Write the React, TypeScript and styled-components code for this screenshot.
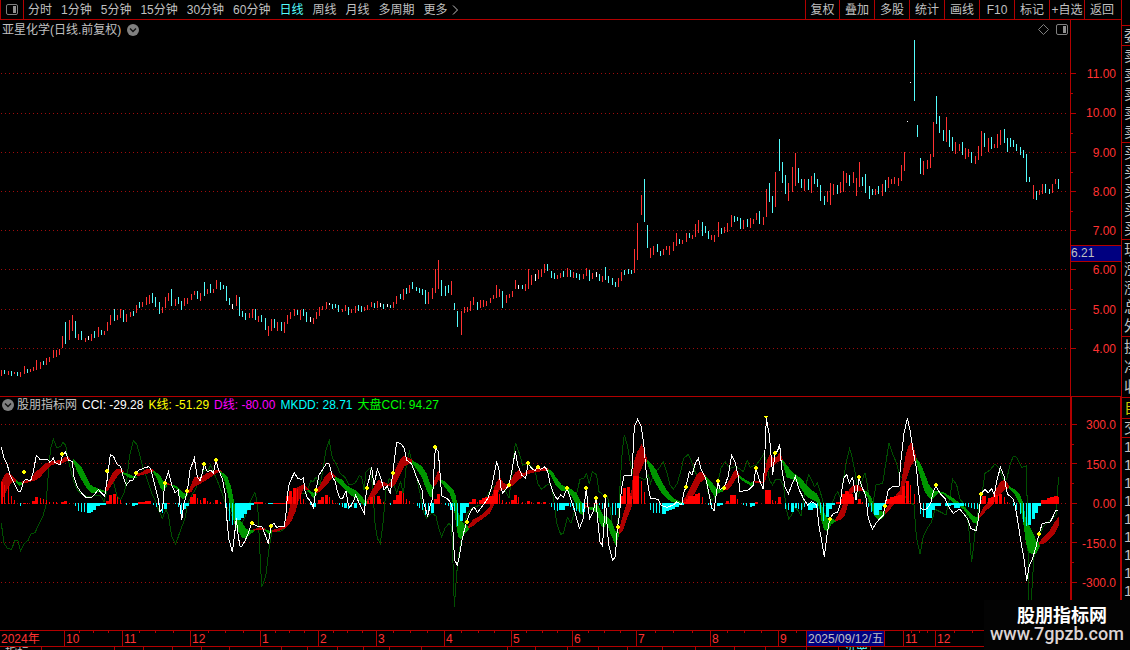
import React from "react";
import styled, { createGlobalStyle } from "styled-components";

const RULE = "#b20000";
const UP = "#ff3232";
const DOWN = "#54fcfc";
const SILVER = "#c0c0c0";

const Global = createGlobalStyle`
  * { box-sizing: border-box; }
  body {
    margin: 0;
    background: #000;
    color: ${SILVER};
    font: 12px/14px "Liberation Sans", "Noto Sans CJK SC", sans-serif;
    overflow: hidden;
  }
  button {
    margin: 0;
    padding: 0;
    border: 0;
    background: none;
    color: inherit;
    font: inherit;
    white-space: nowrap;
    cursor: pointer;
  }
  svg { display: block; }
`;

const Page = styled.div`
  position: relative;
  display: flex;
  height: 100vh;
  overflow: hidden;
`;

const Main = styled.main`
  flex: 1;
  min-width: 0;
  display: flex;
  flex-direction: column;
`;

const Toolbar = styled.header`
  display: flex;
  height: 20px;
  flex: none;
  border-bottom: 1px solid ${RULE};
`;

const LayoutButton = styled.button`
  display: flex;
  align-items: center;
  justify-content: center;
  width: 24px;
  border-left: 1px solid ${RULE};
  border-right: 1px solid ${RULE};
`;

const Periods = styled.nav`
  flex: 1;
  display: flex;
  align-items: center;
  gap: 9px;
  padding-left: 4px;
`;

const Period = styled.button<{ $active?: boolean }>`
  display: flex;
  align-items: center;
  gap: 4px;
  color: ${(p) => (p.$active ? DOWN : SILVER)};
`;

const Tools = styled.div`
  display: flex;
`;

const Tool = styled.button`
  width: 35px;
  border-left: 1px solid ${RULE};
  &:first-child { width: 34px; }
  &:last-child { width: 37px; padding-right: 2px; }
`;

const Panel = styled.section`
  display: flex;
  flex: none;
`;

const Plot = styled.div`
  flex: 1;
  min-width: 0;
`;

const PlotHeader = styled.div<{ $height: number }>`
  display: flex;
  align-items: center;
  height: ${(p) => p.$height}px;
  padding: 0 2px;
  white-space: nowrap;
`;

const TitleRow = styled.div`
  display: flex;
  align-items: center;
  gap: 6px;
  padding-top: 1px;
`;

const HeaderTools = styled.div`
  display: flex;
  gap: 7px;
  margin-left: auto;
  padding-top: 1px;
`;

const Legends = styled.div`
  display: flex;
  gap: 5px;
  padding-left: 3px;
`;

const Legend = styled.span<{ $color?: string }>`
  color: ${(p) => p.$color || SILVER};
`;

const Canvas = styled.svg<{ $height: number }>`
  width: 100%;
  height: ${(p) => p.$height}px;
  shape-rendering: crispEdges;
`;

const Axis = styled.div<{ $framed?: boolean }>`
  position: relative;
  display: flex;
  flex: none;
  width: 51px;
  border-left: ${(p) => (p.$framed ? 2 : 1)}px solid ${RULE};
  border-right: ${(p) => (p.$framed ? 1 : 0)}px solid ${RULE};
`;

const Scale = styled.div<{ $top: number; $bottom: number; $right: number }>`
  flex: 1;
  display: flex;
  flex-direction: column;
  justify-content: space-between;
  padding: ${(p) => p.$top}px ${(p) => p.$right}px ${(p) => p.$bottom}px 0;
  color: ${UP};
  text-align: right;
`;

const PriceTag = styled.div`
  position: absolute;
  top: 225px;
  left: 0;
  right: 0;
  height: 17px;
  line-height: 15px;
  border-top: 1px solid ${RULE};
  border-bottom: 1px solid ${RULE};
  background: #000080;
`;

const Divider = styled.div`
  flex: none;
  height: 1px;
  background: ${RULE};
`;

const Timeline = styled.div<{ $columns: string }>`
  display: grid;
  grid-template-columns: ${(p) => p.$columns};
  flex: none;
  height: 14px;
  border-bottom: 1px solid ${RULE};
  color: ${UP};
`;

const Month = styled.div<{ $first?: boolean; $picked?: boolean }>`
  height: 13px;
  line-height: 12px;
  padding-left: 1px;
  white-space: nowrap;
  border-left: ${(p) => (p.$first ? 0 : 1)}px solid ${RULE};
  background: ${(p) => (p.$picked ? "#000080" : "transparent")};
  color: ${(p) => (p.$picked ? SILVER : "inherit")};
`;

const Tabs = styled.div<{ $columns: string }>`
  display: grid;
  grid-template-columns: ${(p) => p.$columns};
  flex: 1;
  min-height: 3px;
  overflow: hidden;
`;

const Tab = styled.div<{ $active?: boolean }>`
  height: 18px;
  line-height: 12px;
  padding-left: 5px;
  border-right: 1px solid ${RULE};
  color: ${(p) => (p.$active ? DOWN : SILVER)};
  white-space: nowrap;
`;

const Quotes = styled.aside`
  flex: none;
  width: 9px;
  padding-top: 25px;
  border-left: 1px solid ${RULE};
  overflow: hidden;
`;

const QuoteGroup = styled.div<{ $height: number; $color?: string }>`
  display: flex;
  flex-direction: column;
  justify-content: space-around;
  height: ${(p) => p.$height}px;
  padding-left: 2px;
  border-top: 1px solid ${RULE};
  color: ${(p) => p.$color || SILVER};
  font-size: 15px;
  line-height: 18px;
  white-space: nowrap;
`;

const Brand = styled.div`
  position: absolute;
  right: 0;
  bottom: 0;
  width: 146px;
  height: 50px;
  padding: 2px 0 0 6px;
  background: #030303;
  color: #fff;
`;

const BrandName = styled.div`
  padding-left: 27px;
  font: 700 18px/24px "Noto Sans CJK SC", sans-serif;
`;

const BrandSite = styled.div`
  color: #dcd4d4;
  font: 500 18px/16px Roboto, sans-serif;
`;

/* Daily bars: x, high, low, kind (r rise, c fall, w flat) */
const BARS = `
1,370,376,r 4,370,374,c 8,371,375,r 11,371,376,c 14,372,374,r 17,372,376,c 20,372,377,r 24,366,374,r 27,369,373,c 30,369,372,r
33,367,371,r 36,360,370,r 40,362,369,r 43,361,365,c 46,358,365,r 49,357,362,r 53,350,358,r 56,350,357,r 59,349,355,r 62,336,348,r
65,322,344,c 69,320,340,r 72,315,331,r 75,321,338,c 78,334,340,r 81,331,340,c 85,338,342,r 88,336,340,w 91,334,341,r 94,331,338,c
98,327,337,r 101,330,335,c 104,331,335,r 107,322,331,r 110,315,325,r 114,309,321,c 117,315,320,r 120,309,318,r 123,310,322,c 126,314,322,r
130,312,317,r 133,311,316,c 136,305,313,r 139,302,308,c 142,302,307,r 146,297,305,r 149,295,304,r 152,293,303,c 155,297,307,c 159,302,314,c
162,307,313,r 165,297,308,r 168,293,301,r 171,289,306,c 175,299,306,r 178,297,304,c 181,301,310,c 184,298,306,r 187,298,304,r 191,294,300,r
194,291,295,r 197,291,299,c 200,293,301,r 204,282,296,c 207,289,294,r 210,284,293,c 213,289,293,r 216,280,289,r 220,282,290,c 223,285,289,c
226,286,301,c 229,298,305,c 232,304,309,w 236,295,306,r 239,297,316,c 242,311,317,c 245,313,320,c 249,313,318,r 252,309,318,r 255,309,320,c
258,316,322,r 261,315,322,c 265,318,330,c 268,326,336,r 271,319,331,r 274,319,328,c 277,322,331,r 281,322,331,c 284,322,333,r 287,315,324,r
290,312,319,r 294,309,316,r 297,310,315,c 300,310,320,r 303,309,316,c 306,312,322,c 310,317,322,w 313,318,324,r 316,312,319,r 319,307,316,r
322,306,310,r 326,302,309,r 329,303,305,w 332,304,309,c 335,304,308,c 338,305,312,c 342,309,312,r 345,305,311,r 348,307,315,c 351,309,313,r
355,306,313,r 358,305,311,c 361,306,312,c 364,307,311,r 367,305,310,r 371,302,307,r 374,303,308,c 377,301,308,r 380,303,307,w 383,304,309,c
387,304,307,w 390,305,308,c 393,302,308,r 396,296,304,r 400,294,299,c 403,289,300,r 406,288,294,c 409,285,293,r 412,282,289,c 416,287,291,c
419,288,293,c 422,289,295,c 425,290,304,c 428,292,304,r 432,288,299,r 435,269,293,r 438,260,289,r 441,280,296,c 445,286,296,c 448,285,293,c
451,281,295,r 454,303,310,c 457,311,327,c 461,311,335,r 464,307,313,r 467,307,312,r 470,301,311,r 473,297,305,r 477,302,310,c 480,300,308,r
483,300,307,r 486,301,306,r 490,298,303,r 493,295,299,r 496,285,298,r 499,289,297,r 502,291,308,c 506,295,303,r 509,294,298,r 512,291,297,r
515,280,289,r 518,285,289,w 522,285,289,c 525,284,291,r 528,269,289,r 531,275,285,r 535,274,281,w 538,270,279,r 541,269,277,r 544,264,273,r
547,264,271,c 551,271,278,c 554,273,279,c 557,275,279,r 560,273,278,r 563,271,277,c 567,268,277,r 570,270,277,c 573,272,278,r 576,273,278,c
579,274,280,c 583,274,279,r 586,268,276,r 589,270,281,c 592,273,279,r 596,272,277,w 599,274,281,c 602,276,282,r 605,267,280,c 608,276,283,c
612,278,285,c 615,282,287,c 618,278,287,r 621,272,281,r 624,270,275,c 628,269,274,c 631,270,274,c 634,249,273,r 637,223,260,r 641,195,215,r
644,179,222,c 647,225,248,c 650,248,258,r 653,246,255,r 657,244,252,c 660,251,256,c 663,249,255,r 666,246,250,r 669,246,255,r 673,242,251,r
676,233,246,r 679,239,244,c 682,240,244,r 686,233,242,r 689,233,238,c 692,235,239,r 695,224,237,r 698,220,233,r 702,222,236,c 705,226,233,c
708,231,239,c 711,235,240,r 714,235,242,r 718,222,237,r 721,228,234,c 724,227,233,r 727,223,232,r 731,215,227,r 734,216,222,c 737,217,221,c
740,218,229,c 743,220,229,r 747,219,227,c 750,218,228,r 753,219,224,r 756,213,220,r 759,211,224,c 763,217,225,r 766,189,217,r 769,183,202,c
772,196,213,c 775,172,207,r 779,139,171,c 782,162,183,c 785,175,194,c 788,183,201,r 792,167,192,r 795,153,186,r 798,168,183,c 801,179,188,c
804,179,191,r 808,179,190,c 811,176,193,r 814,173,184,c 817,179,187,c 820,185,201,c 824,196,205,c 827,191,202,r 830,183,205,r 833,184,195,r
837,185,194,c 840,182,193,r 843,171,192,r 846,173,183,r 849,175,186,c 853,172,183,r 856,178,196,r 859,162,187,r 862,177,186,c 865,174,193,c
869,186,199,c 872,189,195,c 875,189,195,r 878,186,194,c 882,184,196,r 885,180,192,c 888,177,188,r 891,179,184,r 894,177,184,r 898,178,186,r
901,165,181,r 904,152,171,r 907,121,122,w 910,82,83,w 914,40,101,c 917,125,137,c 920,158,174,c 923,161,175,r 927,160,169,r 930,154,168,r
933,122,157,r 936,96,124,c 939,116,133,c 943,130,141,c 946,117,142,r 949,130,147,c 952,137,151,c 955,142,154,r 959,144,151,r 962,142,155,c
965,148,159,r 968,149,157,r 971,152,163,c 975,156,164,r 978,146,160,r 981,131,156,r 984,133,147,c 988,138,152,r 991,137,149,c 994,144,148,r
997,134,148,r 1000,130,145,r 1004,129,143,c 1007,138,152,c 1010,138,147,c 1013,140,147,c 1016,144,151,c 1020,147,155,c 1023,150,158,c 1026,154,182,c
1029,177,182,c 1033,185,199,r 1036,191,200,c 1039,190,195,r 1042,184,194,r 1045,184,193,c 1049,189,194,c 1052,184,193,r 1055,179,184,r 1058,179,189,c`;

/* Indicator samples are kept per block, in thirds of a chart unit from the block's origin */
type Block = { from: number; data: string };

const CCI: Block[] = [
  { from: 0, data: "4,172 12,205 22,225 30,255 38,270 48,290 55,305 62,305 70,275 78,268 92,272 100,245 109,196 120,208 145,210 150,217 160,204 165,218 180,225 186,200 196,185 205,210 217,215 222,260 232,290 245,310 258,322 275,322 285,312 295,298 305,310 314,318 320,280 331,193 341,200 350,222 362,230 370,262 379,285 390,272 400,270 410,245 418,240 430,235 446,230 452,237 460,268 468,300 474,325 480,365 488,355 494,280 505,245 515,285 525,308 535,300 540,345 545,390 552,340 562,305 570,240 583,205 592,260 600,272 607,250 612,222 622,245 632,240 640,250 648,210 656,240 668,270 675,310 680,380 686,445 697,485 703,440 709,385 715,440 720,468 726,468 735,452 745,430" },
  { from: 250, data: "5,400 20,408 35,408 42,425 55,462 63,408 72,400 80,412 92,408 103,408 108,370 113,310 118,280 133,248 143,265 155,268 161,262 163,295 170,320 182,335 190,352 198,300 207,255 220,235 230,220 238,222 247,260 256,275 262,305 270,325 278,325 288,303 295,345 300,352 310,335 317,315 330,345 343,370 350,295 358,265 365,232 372,285 382,238 392,262 402,300 412,288 421,312 428,250 440,157 452,160 463,175 470,210 485,222 500,262 516,300 520,335 533,378 541,345 548,325 550,270 556,172 565,185 570,250 575,318 590,325 600,335 606,350 610,450 614,510 622,525 628,500 635,455 642,425 650,395 660,368 672,350 682,368 692,355 705,338 715,322 725,290 732,255 740,214 747,240" },
  { from: 500, data: "2,290 8,310 15,300 27,285 36,240 46,183 53,225 65,255 77,265 84,220 92,232 105,243 113,230 122,238 135,230 143,245 150,280 160,310 172,328 182,315 190,322 201,295 210,322 222,355 238,415 250,385 253,345 259,295 264,350 269,385 280,365 288,325 293,390 300,455 307,467 311,420 316,318 320,390 326,465 338,511 346,500 352,415 359,370 364,300 372,257 395,255 399,190 403,110 413,88 424,110 432,170 438,240 446,300 452,325 475,328 482,345 500,352 520,345 530,335 545,345 551,310 558,290 568,245 576,255 586,220 595,205 604,240 617,265 625,300 634,350 642,362 654,275 660,298 672,295 684,260 695,195 706,218 715,260 720,305 745,300" },
  { from: 750, data: "0,296 10,285 18,234 28,270 40,298 45,180 49,85 58,135 68,255 75,188 82,185 89,163 95,235 105,290 115,312 125,285 136,260 148,300 160,325 173,345 185,335 200,345 208,415 213,440 223,500 231,435 239,388 250,370 262,368 270,345 275,305 281,265 290,253 298,280 308,262 318,330 327,262 335,290 347,315 355,385 367,417 378,400 390,385 400,375 405,345 415,300 430,288 447,288 452,220 462,130 472,85 480,120 490,185 500,240 505,300 512,355 522,360 532,355 542,340 550,305 558,288 570,310 585,325 597,352 610,370 628,358" },
  { from: 960, data: "0,358 22,385 32,415 48,422 55,390 63,312 75,298 85,308 95,296 103,315 110,275 121,232 132,258 142,312 158,325 165,345 172,385 185,470 191,500 200,572 208,525 218,505 228,470 237,432 247,400 270,397 278,382 288,360 294,360" },
];

const MARKET: Block[] = [
  { from: 0, data: "4,400 12,460 22,475 35,478 45,450 53,450 62,483 72,462 85,450 92,432 105,428 118,400 130,375 138,345 145,250 152,175 160,148 170,172 182,170 188,157 197,165 203,205 215,250 222,275 232,300 245,312 262,320 280,318 300,315 312,335 322,300 330,270 340,275 352,322 362,328 372,310 380,275 388,200 400,152 410,162 418,190 428,230 437,255 445,280 455,310 465,330 475,358 487,385 498,358 505,375 515,440 527,463 540,425 555,385 562,345 572,322 585,300 600,265 612,240 625,240 632,225 640,245 655,280 668,315 680,350 692,370 705,395 718,415 728,395 735,380 745,350" },
  { from: 250, data: "5,325 15,308 23,345 28,450 35,592 47,560 58,470 66,425 90,425 105,415 115,385 125,360 140,345 152,310 170,310 182,272 190,275 198,260 210,285 218,245 228,180 238,152 247,205 258,220 270,250 285,262 297,285 315,280 328,257 335,260 342,300 348,245 360,235 368,290 375,400 382,445 391,460 399,400 408,300 418,265 430,280 440,308 452,275 460,315 470,215 478,185 488,225 500,262 510,310 522,370 530,385 545,370 558,378 566,415 575,440 585,415 597,400 605,410 609,520 613,650 620,550 630,470 640,410 652,370 665,355 690,345 705,330 718,305 730,290 745,285" },
  { from: 500, data: "5,285 15,300 27,325 36,250 46,158 58,190 68,225 85,220 98,235 106,245 113,280 125,298 140,285 152,280 160,320 170,400 182,433 190,430 202,382 213,400 222,370 230,310 240,268 252,265 260,250 268,282 277,245 290,255 297,305 310,315 322,320 330,350 340,430 348,455 355,380 361,270 367,180 373,135 383,170 392,225 400,255 420,262 435,270 445,255 452,280 462,245 475,238 490,215 500,245 510,285 520,298 532,280 542,245 551,205 565,193 575,215 587,250 600,262 617,265 625,310 637,330 648,315 655,270 663,235 675,215 690,235 705,230 717,235 730,245 742,212" },
  { from: 750, data: "0,232 18,225 30,210 41,192 50,215 58,270 68,285 77,268 90,268 100,285 110,360 116,387 125,375 133,350 143,360 153,377 162,320 170,275 176,255 185,270 193,290 202,280 212,310 222,345 232,350 245,345 255,318 263,305 272,325 280,270 290,210 299,175 307,205 315,245 325,320 335,275 345,248 353,290 358,345 367,350 378,285 398,280 408,215 417,160 428,192 440,220 450,260 460,265 465,320 478,335 492,345 499,440 510,492 520,440 532,415 545,395 555,358 570,365 588,375 598,330 608,268 620,285" },
  { from: 960, data: "0,328 15,345 25,400 35,517 45,430 57,345 65,320 75,250 90,240 105,222 118,235 130,268 140,268 150,225 160,198 170,202 185,232 199,228 203,400 206,640 213,640 222,500 232,450 250,410 275,385 288,375 292,310 296,262" },
];

/* K/D ribbon: "colour x,top,bottom ..." per stretch */
const RIBBON: Block[] = [
  { from: 0, data: `r 2,278,345 12,258,318 22,248,298 30,250,285 40,260,275 48,270,276|g 48,270,276 57,276,288 66,276,284
|r 66,274,282 92,268,275 105,248,272 120,235,262 135,222,245 150,214,228 165,212,222 185,210,220 196,200,216 210,203,209
|g 218,206,213 232,218,245 245,232,270 260,262,295 272,285,308 285,292,308 300,297,306 314,302,308
|r 314,302,308 325,275,300 338,248,280 350,236,262 362,236,250 372,246,251|g 368,246,250 385,252,262 400,258,266 412,260,263
|r 410,253,260 425,246,255 440,238,252 455,236,246 462,242,245|g 458,240,244 470,248,265 480,255,290 488,270,305 495,278,295 502,283,288
|r 500,280,286 515,281,286|g 515,283,287 530,288,298 538,295,318 548,308,328 558,312,322 565,308,312
|r 565,305,310 575,280,305 583,262,290 600,262,282 620,250,270 640,244,256 655,238,246 665,243,247
|g 661,243,248 673,252,270 683,262,310 693,290,360 703,340,400 715,385,425 728,400,445 740,418,443 752,420,430 762,418,421
|r 758,418,422 780,412,420 795,415,420|g 795,418,422 808,424,435` },
  { from: 250, data: `g 0,424,434 12,418,424|r 12,417,422 30,412,418 48,417,421|g 46,418,424 58,422,436 66,420,426
|r 66,420,426 85,415,424 103,408,416 113,375,408 123,335,395 135,300,370 145,290,335 160,283,298 170,292,300 178,300,303
|g 174,298,304 190,308,324 200,304,314|r 198,300,310 210,285,305 225,260,290 238,245,275 250,250,262 260,261,266
|g 256,261,268 275,268,290 290,285,305 305,295,318 320,302,325 335,318,340 345,333,350 352,334,338
|r 350,332,338 360,312,330 372,290,320 385,270,305 400,276,288 415,282,288 425,272,292 435,240,285 450,210,255 462,197,230 475,203,222 489,211,220
|g 487,211,220 500,218,238 515,228,262 530,250,300 540,280,320 550,293,320|r 548,285,295 558,258,285 565,240,270 573,265,275
|g 572,268,275 585,275,292 600,290,312 610,300,345 618,320,400 624,365,440 632,385,446 643,405,432 657,408,420
|r 655,408,414 670,388,408 685,380,395 700,370,385 720,350,370 730,300,350 740,275,320 750,262,295 762,280,290 775,282,290 785,265,288 795,248,280 808,240,268` },
  { from: 500, data: `r 0,275,303 15,282,297 30,282,292 40,255,285 55,240,270 70,250,260 85,240,252 105,238,247 130,234,243 143,235,241
|g 143,236,242 155,242,262 170,265,290 185,285,302 200,292,302 215,298,320 230,310,350 240,330,372 250,345,375 257,345,352
|r 254,345,351 268,349,354|g 265,350,356 280,352,362 292,340,370 300,358,400 310,378,415 320,378,400 335,395,440 347,425,465 356,425,440 361,412,418
|r 357,420,432 370,370,420 385,325,375 395,300,350 402,215,285 412,185,265 425,162,235 433,180,215 443,210,217
|g 441,210,218 455,222,255 470,242,285 485,275,310 500,300,325 515,320,335 535,333,341 550,337,342
|r 546,337,341 560,315,335 575,285,325 590,255,300 600,244,278 617,254,265|g 615,258,264 630,270,298 645,290,322 655,298,310 670,298,304
|r 668,297,303 685,275,298 700,248,280 710,238,262 720,258,262|g 716,256,262 735,268,278 755,280,288 763,276,282` },
  { from: 750, data: `g 0,278,288 12,275,282|r 10,272,277 38,275,280 45,240,275 53,205,245 60,192,232 72,205,225 80,200,218 90,188,212 98,208,214
|g 96,208,214 110,225,262 125,245,267 140,255,275 155,268,298 170,285,320 185,300,328 200,310,335 208,325,355 215,345,395 222,365,418 232,385,425 245,385,402 258,391,395
|r 255,390,395 270,365,390 285,325,375 298,298,330 310,285,305 325,285,302 340,297,302|g 338,297,303 355,308,325 365,325,355 373,350,378 385,362,388 398,365,385 408,360,368
|r 405,362,372 415,345,365 430,325,345 450,300,330 458,250,305 466,200,280 475,168,250 483,158,228 492,172,215 499,205,210
|g 497,202,210 510,218,258 522,245,300 535,280,322 545,295,330 553,303,320 565,304,310 580,306,313 600,318,330 620,332,346 640,348,357 655,362,378 670,378,398 682,383,402 688,375,382` },
  { from: 960, data: `r 58,375,385 68,355,375 80,340,360 95,325,348 108,298,330 120,278,312 133,268,300 148,287,293
|g 146,288,293 165,298,315 180,315,345 190,340,400 198,390,460 207,405,487 220,430,494 230,455,490 240,459,466
|r 237,458,464 255,435,460 270,420,445 285,395,430 297,378,405` },
];

/* MKDD histogram: x, width, tip; tips above the zero line are gains */
const ZERO = 340;
const MKDD: Block[] = [
  { from: 0, data: "3,6,275 12,3,283 24,3,285 33,3,315 42,3,328 60,3,348 69,9,336 81,3,337 96,12,330 105,9,318 120,3,322 129,3,324 138,3,327 147,3,333 159,3,333 168,3,334 183,9,334 192,9,330 207,3,337 225,3,350 234,3,363 243,3,366 252,3,368 261,12,370 270,9,367 279,9,360 288,12,350 300,18,347 318,9,330 327,9,312 339,9,310 351,3,318 360,3,327 378,3,345 396,9,348 405,9,345 414,9,334 423,12,333 435,18,330 459,3,345 468,3,352 477,3,368 486,3,370 492,9,358 501,9,336 525,3,344 534,3,352 543,3,372 549,9,357 558,9,350 570,9,318 579,9,309 591,3,321 600,3,328 609,9,321 621,3,330 630,3,333 645,9,328 660,3,335 678,3,370 687,3,395 696,3,405 705,18,390 723,9,385 732,9,372 741,12,360 753,9,345" },
  { from: 250, data: "0,4,360 12,27,335 54,15,344 69,36,336 108,9,315 117,9,300 129,9,292 141,3,295 150,3,308 159,3,325 180,3,345 189,9,352 204,9,327 213,9,318 225,9,312 237,3,318 246,3,328 255,3,337 267,3,346 276,3,352 282,9,355 294,3,357 303,3,352 312,9,355 330,3,352 342,3,358 351,6,332 360,9,320 372,3,315 381,9,315 390,3,325 399,3,335 420,3,345 429,9,328 438,9,312 447,9,300 459,3,307 468,3,325 477,3,332 501,3,350 507,3,355 516,3,362 525,3,377 534,3,372 543,9,370 552,9,325 561,9,309 585,3,345 594,3,350 600,9,360 612,3,365 621,3,408 630,9,395 639,9,370 648,9,352 657,9,333 666,12,325 681,3,335 687,9,328 696,9,322 705,12,320 717,18,315 732,12,297 747,3,310" },
  { from: 500, data: "6,3,327 18,3,335 27,3,335 33,9,327 42,9,312 54,3,320 66,3,333 81,9,330 93,3,334 111,9,333 129,9,333 153,3,352 162,3,360 171,3,363 177,18,362 195,12,350 210,3,352 219,3,360 228,3,365 237,3,368 246,9,366 255,9,336 285,9,336 297,3,345 306,3,357 324,3,352 336,3,375 345,3,375 351,9,354 360,9,315 369,9,292 381,9,288 390,6,315 399,18,257 423,3,270 432,3,303 450,3,362 459,3,370 468,3,370 477,3,370 486,12,372 498,9,365 507,9,362 516,9,359 525,12,352 537,15,347 552,9,333 558,6,325 564,12,315 576,9,315 585,12,310 594,6,306 606,3,320 624,3,347 633,3,358 642,3,365 651,9,350 660,9,345 678,9,330 690,18,312 711,3,325 729,3,346 738,3,348" },
  { from: 750, data: "0,6,352 6,9,348 15,9,334 45,18,297 66,3,327 75,3,330 84,9,318 105,3,357 114,3,362 123,9,366 135,6,354 144,3,358 153,3,360 162,3,352 174,15,362 189,9,355 201,3,365 210,3,370 219,3,395 228,9,382 237,9,358 246,9,345 258,12,335 270,6,325 276,9,310 285,9,300 294,3,305 297,12,310 309,3,318 324,9,325 336,3,335 354,3,352 363,3,368 372,15,375 387,9,360 396,9,350 408,12,325 420,12,318 432,12,315 444,12,312 456,9,285 468,9,270 480,3,282 492,3,310 510,3,372 519,3,382 528,18,385 546,9,362 555,18,348 585,9,348 594,9,350 603,9,347 612,9,356 621,9,354" },
  { from: 960, data: "0,12,350 15,3,350 24,3,353 33,3,356 42,3,357 51,3,358 60,9,328 66,12,316 84,9,322 93,9,318 105,9,312 117,9,310 132,3,320 141,3,335 159,3,350 168,3,360 180,3,372 189,3,398 198,3,410 204,9,405 216,9,388 225,9,370 234,9,350 243,18,327 261,9,322 270,12,320 282,12,316 294,3,320" },
];

const SIGNALS: Block[] = [
  { from: 0, data: "72,245 186,192 321,242 408,249 495,279 561,303 612,222 648,210 756,399" },
  { from: 250, data: "63,408 198,300 351,294 429,249 555,171 651,396 777,285" },
  { from: 500, data: "84,219 114,231 201,294 258,294 288,324 315,318 354,411 558,291 654,273 672,294 768,234" },
  { from: 750, data: "75,189 240,387 327,261 405,348 558,285 693,312" },
  { from: 960, data: "237,432" },
];

const split = (s: string) => s.trim().split(/\s+/).map((t) => t.split(","));
const px = (from: number, v: number | string) => from + Number(v) / 3;
const py = (v: number | string) => 390 + Number(v) / 3;

const linePoints = (blocks: Block[]) =>
  blocks.map((b) => split(b.data).map(([x, y]) => `${px(b.from, x)},${py(y)}`).join(" ")).join(" ");

const ribbonShapes = RIBBON.flatMap((b) =>
  b.data.split("|").map((stretch) => {
    const s = stretch.trim();
    const cols = split(s.slice(1));
    const top = cols.map(([x, t]) => `${px(b.from, x)},${py(t)}`);
    const low = cols.map(([x, , l]) => `${px(b.from, x)},${py(l)}`).reverse();
    return { fill: s[0] === "r" ? "#b00000" : "#009600", points: [...top, ...low].join(" ") };
  })
);

const kinds: Record<string, string> = { r: UP, c: DOWN, w: "#fff" };

const Grid = ({ rows }: { rows: number[] }) => (
  <g stroke="#a00c0c" strokeDasharray="1 3">
    {rows.map((y) => (
      <line key={y} x1={1} x2={1067} y1={y + 0.5} y2={y + 0.5} />
    ))}
  </g>
);

const Ticks = ({ top, height, major, minor }: { top: number; height: number; major: number[]; minor: number[] }) => (
  <svg width={5} height={height} viewBox={`0 ${top} 5 ${height}`} shapeRendering="crispEdges" fill={RULE}>
    {major.map((y) => <rect key={y} x={0} y={y} width={5} height={1} />)}
    {minor.map((y) => <rect key={y} x={0} y={y} width={2} height={1} />)}
  </svg>
);

const PanelIcon = () => (
  <svg width={12} height={12} viewBox="0 0 12 12" fill="none">
    <rect x="0.5" y="0.5" width="11" height="10" rx="1.5" stroke="#808080" />
    <rect x="7" y="2" width="3" height="7" fill="#909090" />
  </svg>
);

const DiamondIcon = () => (
  <svg width={11} height={11} viewBox="0 0 11 11" fill="none">
    <path d="M5.5 0.5 10.5 5.5 5.5 10.5 0.5 5.5Z" stroke="#808080" />
  </svg>
);

const CollapseIcon = () => (
  <svg width={12} height={12} viewBox="0 0 12 12" fill="none">
    <circle cx="6" cy="6" r="6" fill="#808080" />
    <path d="M3 4.5 6 7.5 9 4.5" stroke="#111" strokeWidth="1.4" />
  </svg>
);

const MoreIcon = () => (
  <svg width={7} height={10} viewBox="0 0 7 10" fill="none">
    <path d="M1 0.5 5.5 5 1 9.5" stroke={SILVER} />
  </svg>
);

const PERIODS = ["分时", "1分钟", "5分钟", "15分钟", "30分钟", "60分钟", "日线", "周线", "月线", "多周期", "更多"];
const TOOLS = ["复权", "叠加", "多股", "统计", "画线", "F10", "标记", "+自选", "返回"];
const PRICES = [73, 113, 152, 191, 230, 269, 309, 348];
const LEVELS = [424, 463, 503, 542, 582];

const MONTHS: [string, number][] = [
  ["2024年", 64], ["10", 58], ["11", 68], ["12", 70], ["1", 58], ["2", 58], ["3", 68], ["4", 67], ["5", 61],
  ["6", 64], ["7", 74], ["8", 68], ["9", 28], ["2025/09/12/五", 78], ["", 19], ["11", 32], ["12", 186],
];
const MONTH_TICKS = [64, 122, 190, 260, 318, 376, 444, 511, 572, 636, 710, 778, 806, 884, 903, 935];
const WEEK_TICKS = [
  79, 93, 108, 139, 155, 173, 208, 225, 243, 275, 289, 304, 333, 347, 362, 393, 410, 427, 461, 478, 494, 526, 542, 557,
  588, 604, 620, 655, 673, 692, 727, 744, 761, 796, 911, 919, 927, 954, 972,
];
const TABS = [42, 73, 29, 29, 29, 28, 52, 26, 30, 26, 26, 32, 86, 28, 32, 31, 29, 35, 33, 39, 31, 41, 32, 32, 250];
const TAB_LABELS: Record<number, string> = { 0: "指标", 23: "设置" };

const columns = (spans: number[]) => spans.map((n) => `minmax(0, ${n}fr)`).join(" ");

export default function App() {
  return (
    <>
      <Global />
      <Page>
        <Main>
          <Toolbar>
            <LayoutButton aria-label="布局"><PanelIcon /></LayoutButton>
            <Periods>
              {PERIODS.map((p) => (
                <Period key={p} $active={p === "日线"}>
                  {p}
                  {p === "更多" && <MoreIcon />}
                </Period>
              ))}
            </Periods>
            <Tools>
              {TOOLS.map((t) => <Tool key={t}>{t}</Tool>)}
            </Tools>
          </Toolbar>

          <Panel>
            <Plot>
              <PlotHeader $height={18}>
                <TitleRow>
                  <span>亚星化学(日线.前复权)</span>
                  <button aria-label="展开"><CollapseIcon /></button>
                </TitleRow>
                <HeaderTools>
                  <button aria-label="标注"><DiamondIcon /></button>
                  <button aria-label="侧栏"><PanelIcon /></button>
                </HeaderTools>
              </PlotHeader>
              <Canvas $height={358} viewBox="0 38 1070 358" preserveAspectRatio="none">
                <Grid rows={PRICES} />
                {split(BARS).map(([x, t, b, k]) => (
                  <rect key={x} x={x} y={t} width={1} height={Number(b) - Number(t)} fill={kinds[k]} />
                ))}
              </Canvas>
            </Plot>
            <Axis>
              <Ticks top={20} height={376} major={PRICES} minor={[93, 133, 172, 211, 289, 329]} />
              <Scale $top={47} $bottom={40} $right={5}>
                {["11.00", "10.00", "9.00", "8.00", "7.00", "6.00", "5.00", "4.00"].map((v) => (
                  <span key={v}>{v}</span>
                ))}
              </Scale>
              <PriceTag>6.21</PriceTag>
            </Axis>
          </Panel>

          <Divider />

          <Panel>
            <Plot>
              <PlotHeader $height={16}>
                <button aria-label="收起"><CollapseIcon /></button>
                <Legends>
                  <Legend>股朋指标网</Legend>
                  <Legend $color="#fff">CCI: -29.28</Legend>
                  <Legend $color="#ffff00">K线: -51.29</Legend>
                  <Legend $color="#ff00ff">D线: -80.00</Legend>
                  <Legend $color="#00ffff">MKDD: 28.71</Legend>
                  <Legend $color="#00ff00">大盘CCI: 94.27</Legend>
                </Legends>
              </PlotHeader>
              <Canvas $height={217} viewBox="0 413 1070 217" preserveAspectRatio="none">
                <Grid rows={LEVELS} />
                <polyline points={linePoints(MARKET)} fill="none" stroke="#005000" />
                {ribbonShapes.map((s, i) => <polygon key={i} points={s.points} fill={s.fill} />)}
                {MKDD.flatMap((b) =>
                  split(b.data).map(([x, w, tip]) => {
                    const gain = Number(tip) < ZERO;
                    const size = Math.round(Math.abs(Number(tip) - ZERO) / 3);
                    return (
                      <rect
                        key={`${b.from}-${x}`}
                        x={Math.round(px(b.from, x))}
                        y={gain ? 504 - size : 503}
                        width={Math.round(Number(w) / 3)}
                        height={size}
                        fill={gain ? "#ff0000" : "#00ffff"}
                      />
                    );
                  })
                )}
                <polyline points={linePoints(CCI)} fill="none" stroke="#fff" />
                <g fill="#ffff00">
                  {SIGNALS.flatMap((b) =>
                    split(b.data).map(([x, y]) => {
                      const cx = Math.round(px(b.from, x));
                      const cy = Math.round(py(y));
                      return <path key={`${b.from}-${x}`} d={`M${cx - 1} ${cy - 2}h2v1h1v2h-1v1h-2v-1h-1v-2h1z`} />;
                    })
                  )}
                  <path d="M764 416h4v1h-1v1h-2v-1h-1z" />
                </g>
              </Canvas>
            </Plot>
            <Axis $framed>
              <Ticks top={397} height={233} major={LEVELS} minor={[444, 483, 523, 562]} />
              <Scale $top={21} $bottom={40} $right={4}>
                {["300.0", "150.0", "0.00", "-150.0", "-300.0"].map((v) => <span key={v}>{v}</span>)}
              </Scale>
            </Axis>
          </Panel>

          <Canvas $height={3} viewBox="0 630 1121 3" preserveAspectRatio="none" fill={RULE}>
            <rect x={0} y={630} width={1121} height={1} />
            {[...MONTH_TICKS, ...WEEK_TICKS].map((x) => <rect key={x} x={x} y={631} width={1} height={2} />)}
            <rect x={807} y={631} width={77} height={2} fill="#000080" />
          </Canvas>
          <Timeline $columns={columns(MONTHS.map(([, span]) => span))}>
            {MONTHS.map(([label], i) => (
              <Month key={i} $first={i === 0} $picked={label.includes("/")}>{label}</Month>
            ))}
          </Timeline>
          <Tabs $columns={columns(TABS)}>
            {TABS.map((_, i) => (
              <Tab key={i} $active={i === 23}>{TAB_LABELS[i]}</Tab>
            ))}
          </Tabs>
        </Main>

        <Quotes>
          <QuoteGroup $height={20}><span>委</span></QuoteGroup>
          <QuoteGroup $height={97}>{[5, 4, 3, 2, 1].map((n) => <span key={n}>卖</span>)}</QuoteGroup>
          <QuoteGroup $height={97}>{[1, 2, 3, 4, 5].map((n) => <span key={n}>买</span>)}</QuoteGroup>
          <QuoteGroup $height={97}>{["现", "涨", "涨", "总", "外"].map((t, n) => <span key={n}>{t}</span>)}</QuoteGroup>
          <QuoteGroup $height={61}>{["换", "净", "收"].map((t) => <span key={t}>{t}</span>)}</QuoteGroup>
          <QuoteGroup $height={21} $color="#c8c800"><span>自</span></QuoteGroup>
          <QuoteGroup $height={19}><span>交</span></QuoteGroup>
          <QuoteGroup $height={163}>{[1, 2, 3, 4, 5, 6, 7, 8, 9].map((n) => <span key={n}>1</span>)}</QuoteGroup>
        </Quotes>

        <Brand>
          <BrandName>股朋指标网</BrandName>
          <BrandSite>www.7gpzb.com</BrandSite>
        </Brand>
      </Page>
    </>
  );
}
